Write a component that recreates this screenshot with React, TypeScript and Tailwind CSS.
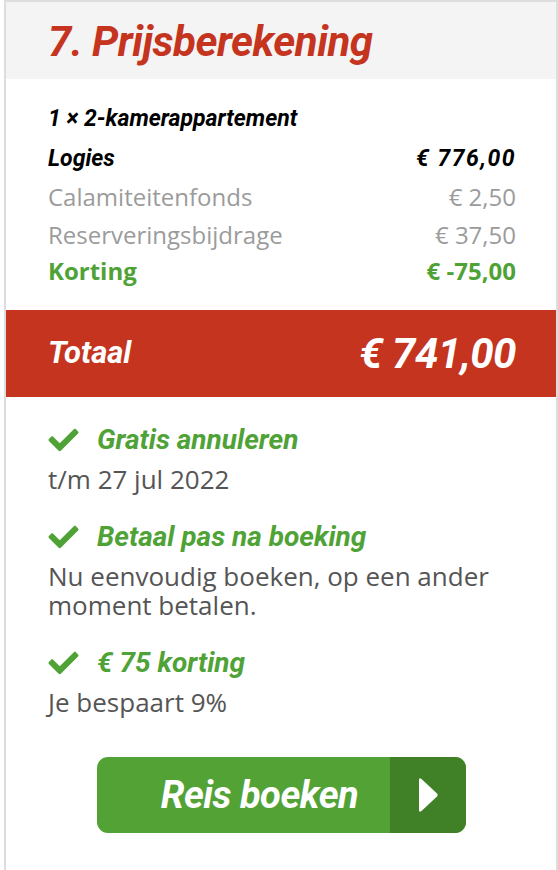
import { FaCheck } from "react-icons/fa";

const head = "font-['Roboto',sans-serif] italic font-bold";
const body = "font-['Open_Sans',sans-serif]";

const perks = [
  { title: "Gratis annuleren", text: ["t/m 27 jul 2022"] },
  { title: "Betaal pas na boeking", text: ["Nu eenvoudig boeken, op een ander", "moment betalen."] },
  { title: "€ 75 korting", text: ["Je bespaart 9%"] },
];

export default function App() {
  return (
    <div className="min-h-[870px] bg-white pl-1">
      <div className="min-h-[870px] border-2 border-b-0 border-[#dddddd] bg-white">
        <div className="h-[77px] bg-[#f4f4f4] pl-[42px] pt-[16px]">
          <h2 className={`${head} text-[42px] leading-[48px] tracking-[-0.5px] text-[#c4341f]`}>7. Prijsberekening</h2>
        </div>

        <div className="pl-[42px] pr-[40px] pt-[20px] pb-[21px]">
          <div className={`${head} text-[23px] leading-[40px] text-black`}>1 × 2-kamerappartement</div>
          <div className={`${head} flex justify-between text-[23px] leading-[39px] text-black`}>
            <span>Logies</span>
            <span className="tracking-[1.5px]">€ 776,00</span>
          </div>
          <div className={`${body} flex justify-between text-[24px] leading-[38px] text-[#9b9b9b]`}>
            <span>Calamiteitenfonds</span>
            <span>€ 2,50</span>
          </div>
          <div className={`${body} flex justify-between text-[24px] leading-[37px] text-[#9b9b9b]`}>
            <span>Reserveringsbijdrage</span>
            <span>€ 37,50</span>
          </div>
          <div className={`${body} flex justify-between text-[24px] font-bold leading-[36px] text-[#4fa236]`}>
            <span>Korting</span>
            <span>€ -75,00</span>
          </div>
        </div>

        <div className="flex h-[87px] items-center justify-between bg-[#c4341f] pl-[42px] pr-[40px] text-white">
          <span className={`${head} text-[31px]`}>Totaal</span>
          <span className={`${head} text-[42px] tracking-[-0.5px]`}>€ 741,00</span>
        </div>

        <div className="flex flex-col gap-[28px] pl-[42px] pr-[40px] pt-[28px]">
          {perks.map((p) => (
            <div key={p.title}>
              <div className="flex h-[30px] items-center gap-[18px]">
                <FaCheck className="h-[30px] w-[31px] text-[#4fa236]" />
                <span className={`${head} text-[28px] leading-[30px] text-[#4fa236]`}>{p.title}</span>
              </div>
              <div className={`${body} mt-[10px] text-[26px] leading-[29px] text-[#555555]`}>
                {p.text.map((t) => (
                  <div key={t}>{t}</div>
                ))}
              </div>
            </div>
          ))}
        </div>

        <div className="pl-[91px] pt-[40px]">
          <button className="flex h-[76px] w-[369px] overflow-hidden rounded-[11px] bg-[#52a236] text-white">
            <span className={`${head} flex flex-1 items-center justify-center pl-[32px] text-[38px] tracking-[-0.5px]`}>Reis boeken</span>
            <span className="flex w-[76px] items-center justify-center bg-[#408127]">
              <svg width="22" height="36" viewBox="0 0 22 36">
                <path d="M2 3 Q2 0 4.5 2 L20 16.5 Q21.5 18 20 19.5 L4.5 34 Q2 36 2 33 Z" fill="white" />
              </svg>
            </span>
          </button>
        </div>
      </div>
    </div>
  );
}
